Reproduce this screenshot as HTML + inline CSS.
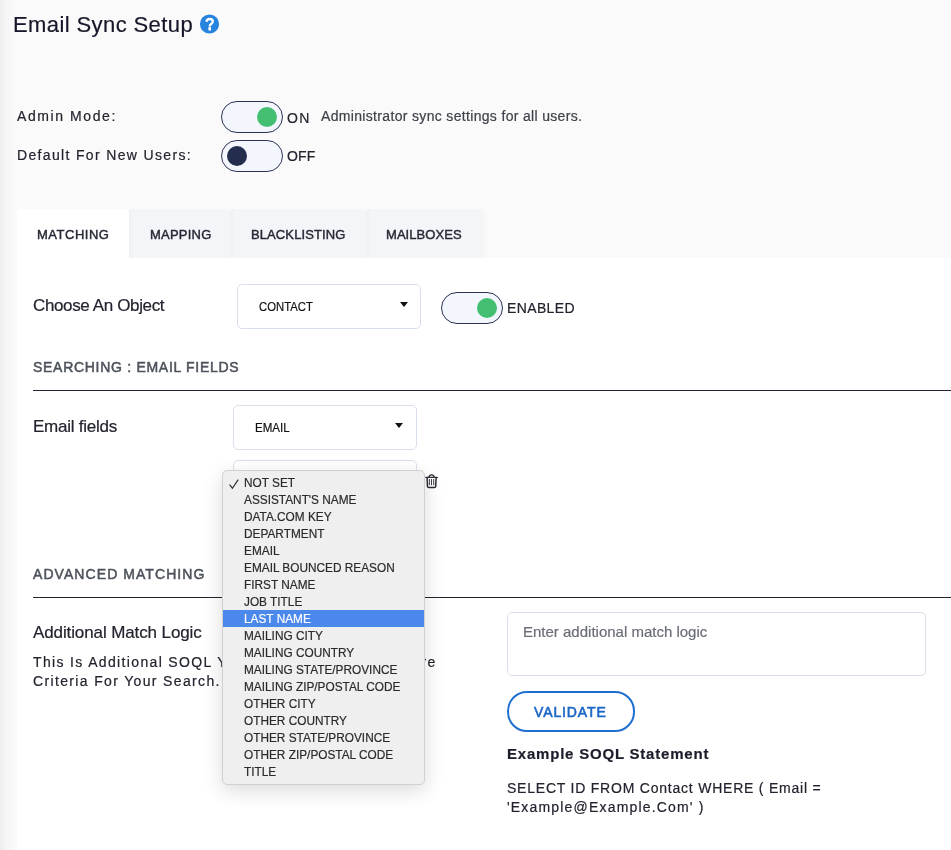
<!DOCTYPE html>
<html><head><meta charset="utf-8">
<style>
html,body{margin:0;padding:0;}
body{width:951px;height:850px;overflow:hidden;position:relative;-webkit-text-stroke:0.2px currentColor;background:#fafafa;font-family:"Liberation Sans",sans-serif;color:#1c1d2b;}
.shadow{position:absolute;left:0;top:0;width:17px;height:850px;background:linear-gradient(to right,#eeeeee,#f4f4f4 5px,#fafafa 14px);}
.abs{position:absolute;white-space:nowrap;}
.t{position:absolute;white-space:nowrap;line-height:1;}
.title{left:13px;top:13.7px;font-size:22px;letter-spacing:0.4px;color:#161728;}
.help{left:200px;top:15px;width:19px;height:19px;border-radius:50%;background:#2a84dc;color:#fff;font-weight:bold;font-size:14px;text-align:center;line-height:19px;}
.lbl{font-size:14px;letter-spacing:1.45px;color:#22232e;}
.tog{position:absolute;width:59px;height:29px;box-sizing:content-box;padding:0 0.5px 1px 0.5px;border:1.5px solid #2b3354;border-radius:16px;background:#f3f6fd;}
.knob{position:absolute;width:20px;height:20px;border-radius:50%;top:4.5px;}
.tabs{position:absolute;top:209px;height:48px;}
.tab{position:absolute;top:209px;height:48.5px;background:#f4f5f8;border-radius:4px 4px 0 0;box-shadow:inset 5px 0 4px -4px rgba(0,0,0,0.035),4px 0 6px -2px rgba(0,0,0,0.03);font-size:13px;-webkit-text-stroke:0.42px #262835;color:#262835;}
.tab span{position:absolute;top:18.4px;}
.panel{position:absolute;left:17px;top:257.5px;width:934px;height:593px;background:#fff;}
.h2{font-size:17px;color:#22232e;}
.sel{position:absolute;width:182px;height:43px;border:1px solid #d9e0ea;border-radius:5px;background:#fff;}
.sel span{position:absolute;font-size:13px;color:#111;}
.caret{position:absolute;width:0;height:0;border-left:4.5px solid transparent;border-right:4.5px solid transparent;border-top:5px solid #111;}
.sect{font-size:14px;-webkit-text-stroke:0.5px #4d525b;letter-spacing:0.71px;color:#4d525b;}
.rule{position:absolute;left:33px;width:918px;height:1px;background:#23242f;}
.para{font-size:14px;letter-spacing:1.35px;color:#22232e;line-height:19px;}
.dd{position:absolute;left:222px;top:469.5px;width:201px;height:313px;background:#efefef;border:1px solid #d0d0d0;border-radius:5px;box-shadow:0 6px 20px rgba(0,0,0,0.14);}
.dd div{position:absolute;left:0;width:201px;height:17px;line-height:17px;font-size:13px;color:#2a2a2a;}
.dd div span{position:absolute;left:21px;top:0.6px;transform:scaleX(0.91);transform-origin:0 0;}
.dd div.hi{background:#4a88ec;color:#fff;}
</style></head>
<body><div style="position:absolute;left:0;top:0;width:951px;height:850px;will-change:transform;">
<div class="shadow"></div>
<div class="t title">Email Sync Setup</div>
<svg class="abs" style="left:195px;top:10px;" width="30" height="30" viewBox="0 0 30 30"><circle cx="14.5" cy="24" r="9.6" fill="#2683de" transform="translate(0,-10)"/><path d="M11.4 11.7C11.7 9.9 12.9 9 14.7 9C16.6 9 17.8 10.1 17.8 11.5C17.8 12.8 17 13.4 16.1 14C15.1 14.7 14.7 15.2 14.7 16.4" fill="none" stroke="#fff" stroke-width="2.3"/><rect x="13.4" y="17.1" width="2.6" height="3.4" fill="#fff"/></svg>

<div class="t lbl" style="left:17px;top:109px;letter-spacing:1.59px;">Admin Mode:</div>
<div class="tog" style="left:221px;top:101px;"><div class="knob" style="left:34.5px;background:#44bf72;"></div></div>
<div class="t lbl" style="left:287px;top:111px;">ON</div>
<div class="t" style="left:321px;top:109px;font-size:14px;letter-spacing:0.33px;color:#3d4049;">Administrator sync settings for all users.</div>

<div class="t lbl" style="left:17px;top:148px;letter-spacing:1.34px;">Default For New Users:</div>
<div class="tog" style="left:221px;top:140px;"><div class="knob" style="left:5px;background:#252d4f;"></div></div>
<div class="t lbl" style="left:287px;top:149px;letter-spacing:0.1px;">OFF</div>

<div class="tab" style="left:17px;width:111.7px;background:#fff;z-index:1;box-shadow:none;"><span style="left:20px;letter-spacing:0.51px;">MATCHING</span></div>
<div class="tab" style="left:128.7px;width:101.3px;"><span style="left:21.3px;letter-spacing:0.23px;">MAPPING</span></div>
<div class="tab" style="left:230px;width:135.5px;"><span style="left:21px;letter-spacing:0.1px;">BLACKLISTING</span></div>
<div class="tab" style="left:365.5px;width:116.5px;"><span style="left:20.5px;letter-spacing:0.06px;">MAILBOXES</span></div>

<div class="panel"></div>

<div class="t h2" style="left:33px;top:297px;letter-spacing:-0.37px;">Choose An Object</div>
<div class="sel" style="left:237px;top:284px;"><span style="left:21px;top:13.5px;transform:scaleX(0.87);transform-origin:0 0;">CONTACT</span><div class="caret" style="left:162px;top:17px;"></div></div>
<div class="tog" style="left:441px;top:292px;"><div class="knob" style="left:34.5px;background:#44bf72;"></div></div>
<div class="t lbl" style="left:507px;top:301px;letter-spacing:0.37px;">ENABLED</div>

<div class="t sect" style="left:33px;top:360px;">SEARCHING : EMAIL FIELDS</div>
<div class="rule" style="top:390px;"></div>

<div class="t h2" style="left:33px;top:417.5px;letter-spacing:-0.25px;">Email fields</div>
<div class="sel" style="left:233px;top:405px;"><span style="left:21px;top:13.5px;transform:scaleX(0.89);transform-origin:0 0;">EMAIL</span><div class="caret" style="left:161px;top:17px;"></div></div>
<div class="sel" style="left:233px;top:460px;"></div>
<svg class="abs" style="left:415px;top:465px;" width="35" height="30" viewBox="0 0 35 30"><path d="M10.9 12.4H22.3" stroke="#2a2b33" stroke-width="1.3" stroke-linecap="round"/><path d="M13.9 12.3C14.1 10.4 14.9 9.8 16.6 9.8C18.3 9.8 19.1 10.4 19.3 12.3" fill="none" stroke="#2a2b33" stroke-width="1.2"/><path d="M12.1 13L12.5 21.5C12.6 22.3 13 22.6 13.8 22.6H19.4C20.2 22.6 20.6 22.3 20.7 21.5L21.1 13" fill="none" stroke="#2a2b33" stroke-width="1.5"/><path d="M14.4 14.4V19.8M16.5 14.4V19.8M18.7 14.4V19.8" stroke="#2a2b33" stroke-width="0.9" stroke-linecap="round"/></svg>

<div class="t sect" style="left:33px;top:567px;letter-spacing:1.07px;">ADVANCED MATCHING</div>
<div class="rule" style="top:597px;"></div>

<div class="t h2" style="left:33px;top:623.5px;letter-spacing:-0.11px;">Additional Match Logic</div>
<div class="abs para" style="left:33px;top:652.7px;">This Is Additional SOQL You Can Add To Be More<br>Criteria For Your Search.</div><div class="abs para" style="left:421.5px;top:653px;">re</div>

<div class="abs" style="left:507px;top:612px;width:417px;height:62px;border:1px solid #d9e0ea;border-radius:5px;"></div>
<div class="t" style="left:523px;top:624px;font-size:15px;color:#6b6e76;">Enter additional match logic</div>

<div class="abs" style="left:507px;top:691px;width:124px;height:37px;border:2px solid #1f6fd1;border-radius:20px;"></div>
<div class="t" style="left:534px;top:704.5px;font-size:14px;-webkit-text-stroke:0.6px #1b67c7;letter-spacing:0.89px;color:#1b67c7;">VALIDATE</div>

<div class="t" style="left:507px;top:746px;font-size:15px;font-weight:bold;letter-spacing:0.79px;color:#1c1d2b;">Example SOQL Statement</div>
<div class="abs para" style="left:507px;top:778.5px;letter-spacing:0.78px;">SELECT ID FROM Contact WHERE ( Email =<br><span style="letter-spacing:1.18px;">'Example@Example.Com' )</span></div>

<div class="dd">
<div style="top:3px;"><svg style="position:absolute;left:0;top:1px;" width="30" height="17" viewBox="0 0 30 17"><path d="M6.6 9.6L9.4 13.3L15.2 4.6" fill="none" stroke="#2a2a2a" stroke-width="1.15"/></svg><span>NOT SET</span></div>
<div style="top:20px;"><span>ASSISTANT'S NAME</span></div>
<div style="top:37px;"><span>DATA.COM KEY</span></div>
<div style="top:54px;"><span>DEPARTMENT</span></div>
<div style="top:71px;"><span>EMAIL</span></div>
<div style="top:88px;"><span>EMAIL BOUNCED REASON</span></div>
<div style="top:105px;"><span>FIRST NAME</span></div>
<div style="top:122px;"><span>JOB TITLE</span></div>
<div class="hi" style="top:139px;"><span>LAST NAME</span></div>
<div style="top:156px;"><span>MAILING CITY</span></div>
<div style="top:173px;"><span>MAILING COUNTRY</span></div>
<div style="top:190px;"><span>MAILING STATE/PROVINCE</span></div>
<div style="top:207px;"><span>MAILING ZIP/POSTAL CODE</span></div>
<div style="top:224px;"><span>OTHER CITY</span></div>
<div style="top:241px;"><span>OTHER COUNTRY</span></div>
<div style="top:258px;"><span>OTHER STATE/PROVINCE</span></div>
<div style="top:275px;"><span>OTHER ZIP/POSTAL CODE</span></div>
<div style="top:292px;"><span>TITLE</span></div>
</div>
</div></body></html>
